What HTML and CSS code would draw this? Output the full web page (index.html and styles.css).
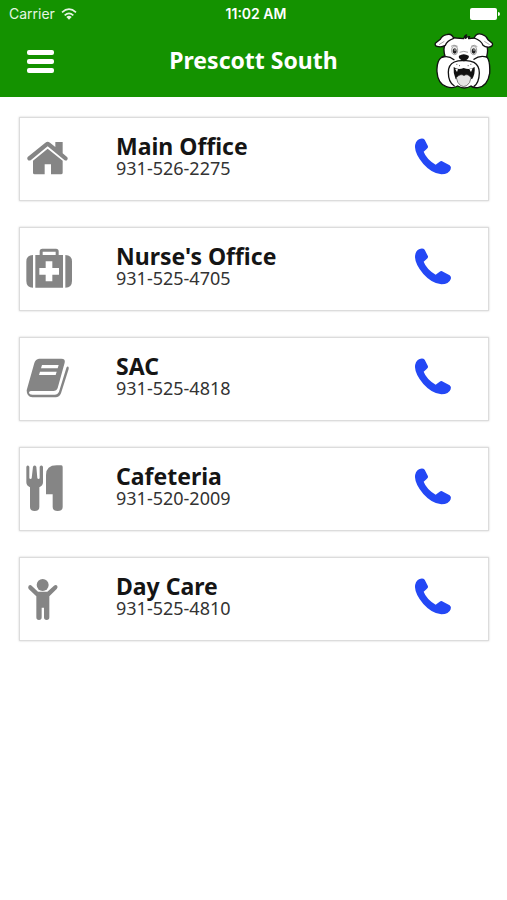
FILE: index.html
```html
<!DOCTYPE html>
<html lang="en">
<head>
<meta charset="utf-8">
<meta name="viewport" content="width=device-width, initial-scale=1">
<title>Prescott South</title>
<link rel="stylesheet" href="styles.css">
</head>
<body>
<svg class="sprite" aria-hidden="true">
  <symbol id="phone" viewBox="30 75 144 144">
    <path d="M57 88 Q68 83 74 89 L84 109 Q85 114 80 117 L71 125 Q79 147 107 164 L119 155 Q124 151 129 155 L149 166 Q155 171 152 178 Q147 193 124 193 Q96 191 70 162 Q46 134 45 112 Q45 94 57 88Z"/>
  </symbol>
</svg>
<header class="header">
  <div class="status">
    <div class="carrier">
      <span>Carrier</span>
      <svg class="wifi" viewBox="0 0 48 36" aria-hidden="true">
        <path d="M3 13 Q24 -6 45 13M11 22 Q24 10 37 22" fill="none" stroke="currentColor" stroke-width="5"/>
        <path d="M16 27 Q24 20 32 27 L24 35Z" fill="currentColor"/>
      </svg>
    </div>
    <div class="time">11:02 AM</div>
    <svg class="battery" viewBox="0 0 30 12" aria-hidden="true">
      <rect width="27" height="12" rx="2"/><path d="M28 4 Q30 4 30 6 Q30 8 28 8Z"/>
    </svg>
  </div>
  <div class="bar">
    <button class="menu" type="button" aria-label="Menu"><span></span><span></span><span></span></button>
    <h1 class="title">Prescott South</h1>
    <svg class="mascot" viewBox="27 90 180 180" role="img" aria-label="Bulldog mascot">
      <g fill="#fff" stroke="#111" stroke-width="4" stroke-linejoin="round" stroke-linecap="round">
        <path d="M64 122 Q74 111 94 114 L116 116 Q120 105 125 105 Q121 111 122 115 Q127 109 134 110 Q130 113 131 116 L150 114 Q175 112 184 132 Q191 148 185 170 Q196 181 194 220 Q188 258 159 263 Q143 264 138 258 Q118 270 98 258 Q83 267 64 260 Q38 250 36 215 Q34 183 51 171 Q57 168 60 168 Q52 143 64 122Z"/>
        <path d="M86 115 Q80 99 65 104 Q51 107 46 118 L31 130 Q28 139 41 140 Q50 142 61 136 Q66 122 86 115Z"/>
        <path d="M148 114 Q153 98 171 103 Q184 107 189 119 L202 130 Q205 139 193 141 Q180 142 174 136 Q169 122 148 114Z"/>
        <path d="M51 172 Q70 165 87 179 M185 171 Q163 165 147 178" fill="none"/>
        <path d="M116 182 Q101 181 88 186 Q70 194 70 217 Q70 248 88 258 M119 182 Q134 181 147 187 Q163 196 163 219 Q162 249 147 259" fill="none"/>
      </g>
      <path d="M86 201 Q99 211 116 204 Q134 211 149 201 Q151 222 141 238 Q128 226 117 233 Q107 226 92 238 Q84 220 86 201Z" fill="#111"/>
      <path d="M94 233 Q106 219 117 227 Q128 219 138 233 Q136 250 125 257 Q116 262 107 257 Q96 249 94 233Z" fill="#e4e4e4" stroke="#444" stroke-width="2"/>
      <path d="M90 206 L99 208 L96 216Z M133 208 L143 205 L138 216Z" fill="#fff"/>
      <path d="M102 167 Q116 158 131 167 Q134 173 124 180 Q117 188 109 180 Q99 174 102 167Z" fill="#111"/>
      <g fill="#eee" stroke="#777" stroke-width="2"><ellipse cx="89" cy="151" rx="9" ry="13"/><ellipse cx="146" cy="151" rx="9" ry="13"/></g>
      <ellipse cx="89" cy="153" rx="6" ry="8" fill="#222"/><ellipse cx="146" cy="153" rx="6" ry="8" fill="#222"/>
      <circle cx="90" cy="150" r="2" fill="#fff"/><circle cx="147" cy="150" r="2" fill="#fff"/>
      <path d="M78 139 Q86 132 98 139 M138 139 Q149 132 157 140 M104 157 Q116 151 129 157 M42 134 L58 124 M194 134 L178 124" stroke="#777" stroke-width="2" fill="none"/>
      <path d="M94 193h3 M102 197h3 M128 197h3 M136 193h3" stroke="#555" stroke-width="3"/>
    </svg>
  </div>
</header>
<main>
  <ul class="contacts">
    <li class="card">
      <svg class="icon" viewBox="45 75 144 144" aria-hidden="true">
        <path d="M53 141 L106 98 Q113 93 120 98 L136 111 V96 H158 V130 L172 142 Q175 147 171 151 Q167 153 163 150 L113 109 L63 150 Q57 154 53 149 Q50 145 53 141Z"/>
        <path d="M69 152 L113 116 L158 152 V188 Q158 193 153 193 H123 V163 H104 V193 H74 Q69 193 69 188Z"/>
      </svg>
      <div class="info"><h2 class="name">Main Office</h2><p class="number">931-526-2275</p></div>
      <a class="call" href="tel:931-526-2275" aria-label="Call Main Office"><svg><use href="#phone"/></svg></a>
    </li>
    <li class="card">
      <svg class="icon" viewBox="45 75 144 144" aria-hidden="true">
        <path d="M69 105 V203 Q49 203 49 183 V125 Q49 105 69 105Z M166 105 Q186 105 186 125 V183 Q186 203 166 203Z"/>
        <path fill-rule="evenodd" d="M76 105 H89 V94 Q89 86 97 86 H138 Q146 86 146 94 V105 H159 V203 H76Z M98 95 V105 H137 V95Z M107 124 V144 H88 V164 H107 V184 H127 V164 H147 V144 H127 V124Z"/>
      </svg>
      <div class="info"><h2 class="name">Nurse's Office</h2><p class="number">931-525-4705</p></div>
      <a class="call" href="tel:931-525-4705" aria-label="Call Nurse's Office"><svg><use href="#phone"/></svg></a>
    </li>
    <li class="card">
      <svg class="icon" viewBox="45 75 144 144" aria-hidden="true">
        <path fill-rule="evenodd" d="M87 86 H154 Q167 86 164 98 L143 174 Q140 183 130 183 H62 Q56 184 57 189 Q58 194 67 194 H134 Q143 194 147 185 L169 114 Q170 108 175 110 Q177 112 176 117 L153 190 Q148 202 137 202 H67 Q50 201 50 181 L73 99 Q77 87 87 86Z M96 105 L93 115 H143 L146 105Z M90 125 L87 135 H137 L140 125Z"/>
      </svg>
      <div class="info"><h2 class="name">SAC</h2><p class="number">931-525-4818</p></div>
      <a class="call" href="tel:931-525-4818" aria-label="Call SAC"><svg><use href="#phone"/></svg></a>
    </li>
    <li class="card">
      <svg class="icon" viewBox="45 75 144 144" aria-hidden="true">
        <path d="M49 80 Q53 73 58 80 V115 Q62 119 65 115 L69 80 Q74 73 79 80 L82 115 Q86 119 89 115 V80 Q94 73 99 80 V127 Q99 137 88 142 V201 Q88 213 74 213 Q60 213 60 201 V142 Q49 137 49 127Z"/>
        <path d="M108 105 Q108 76 140 76 H154 Q158 76 158 81 V201 Q158 213 143 213 Q128 213 128 201 V163 H108Z"/>
      </svg>
      <div class="info"><h2 class="name">Cafeteria</h2><p class="number">931-520-2009</p></div>
      <a class="call" href="tel:931-520-2009" aria-label="Call Cafeteria"><svg><use href="#phone"/></svg></a>
    </li>
    <li class="card">
      <svg class="icon" viewBox="45 75 144 144" aria-hidden="true">
        <circle cx="98" cy="105" r="18"/>
        <path d="M65 107 L84 125 H112 L132 107 Q138 103 142 108 Q144 113 140 117 L118 139 V202 Q118 210 110 210 Q102 210 102 202 V173 H95 V202 Q95 210 87 210 Q79 210 79 202 V139 L56 117 Q53 112 56 107 Q61 103 65 107Z"/>
      </svg>
      <div class="info"><h2 class="name">Day Care</h2><p class="number">931-525-4810</p></div>
      <a class="call" href="tel:931-525-4810" aria-label="Call Day Care"><svg><use href="#phone"/></svg></a>
    </li>
  </ul>
</main>
</body>
</html>
```
FILE: styles.css
```css
* {
  box-sizing: border-box;
}

body {
  margin: 0;
  background: #fff;
  color: #151515;
  font-family: "Noto Sans", "Open Sans", sans-serif;
}

h1,
h2,
p,
ul {
  margin: 0;
  padding: 0;
}

.sprite {
  display: none;
}

.header {
  padding-bottom: 4px;
  background: #149200;
  color: #fff;
}

.status {
  display: grid;
  grid-template-columns: 1fr auto 1fr;
  align-items: center;
  height: 27px;
  padding: 0 7px 0 9px;
  font-family: Inter, sans-serif;
  font-size: 14px;
}

.carrier {
  display: flex;
  align-items: center;
  gap: 6px;
  color: #e6f6e3;
}

.wifi {
  width: 16px;
  height: 12px;
}

.time {
  padding-left: 3px;
  font-weight: 600;
}

.battery {
  justify-self: end;
  width: 30px;
  height: 12px;
  fill: #fff;
}

.bar {
  display: grid;
  grid-template-columns: 60px 1fr 60px;
  align-items: center;
  height: 66px;
  padding: 0 13px;
}

.menu {
  display: flex;
  flex-direction: column;
  gap: 4px;
  width: 54px;
  padding: 15px 13px 13px 14px;
  border: 0;
  background: none;
  cursor: pointer;
}

.menu span {
  height: 5px;
  border-radius: 2px;
  background: #fff;
}

.title {
  font-size: 23px;
  line-height: 32px;
  text-align: center;
}

.mascot {
  width: 60px;
  height: 60px;
}

.contacts {
  display: grid;
  gap: 26px;
  padding: 20px 18px 20px 19px;
  list-style: none;
}

.card {
  display: flex;
  align-items: center;
  height: 84px;
  padding: 0 30px 0 5px;
  border: 1px solid #dcdcdc;
  box-shadow: 0 0 2px #d0d0d0;
}

.icon {
  flex: none;
  width: 48px;
  height: 48px;
  fill: #858585;
}

.info {
  flex: 1;
  padding: 0 0 6px 43px;
}

.name {
  font-size: 23px;
  line-height: 24px;
}

.number {
  color: #333;
  font-size: 18px;
  line-height: 20px;
}

.call,
.call svg {
  display: block;
  width: 48px;
  height: 48px;
  fill: #2448f5;
}
```
